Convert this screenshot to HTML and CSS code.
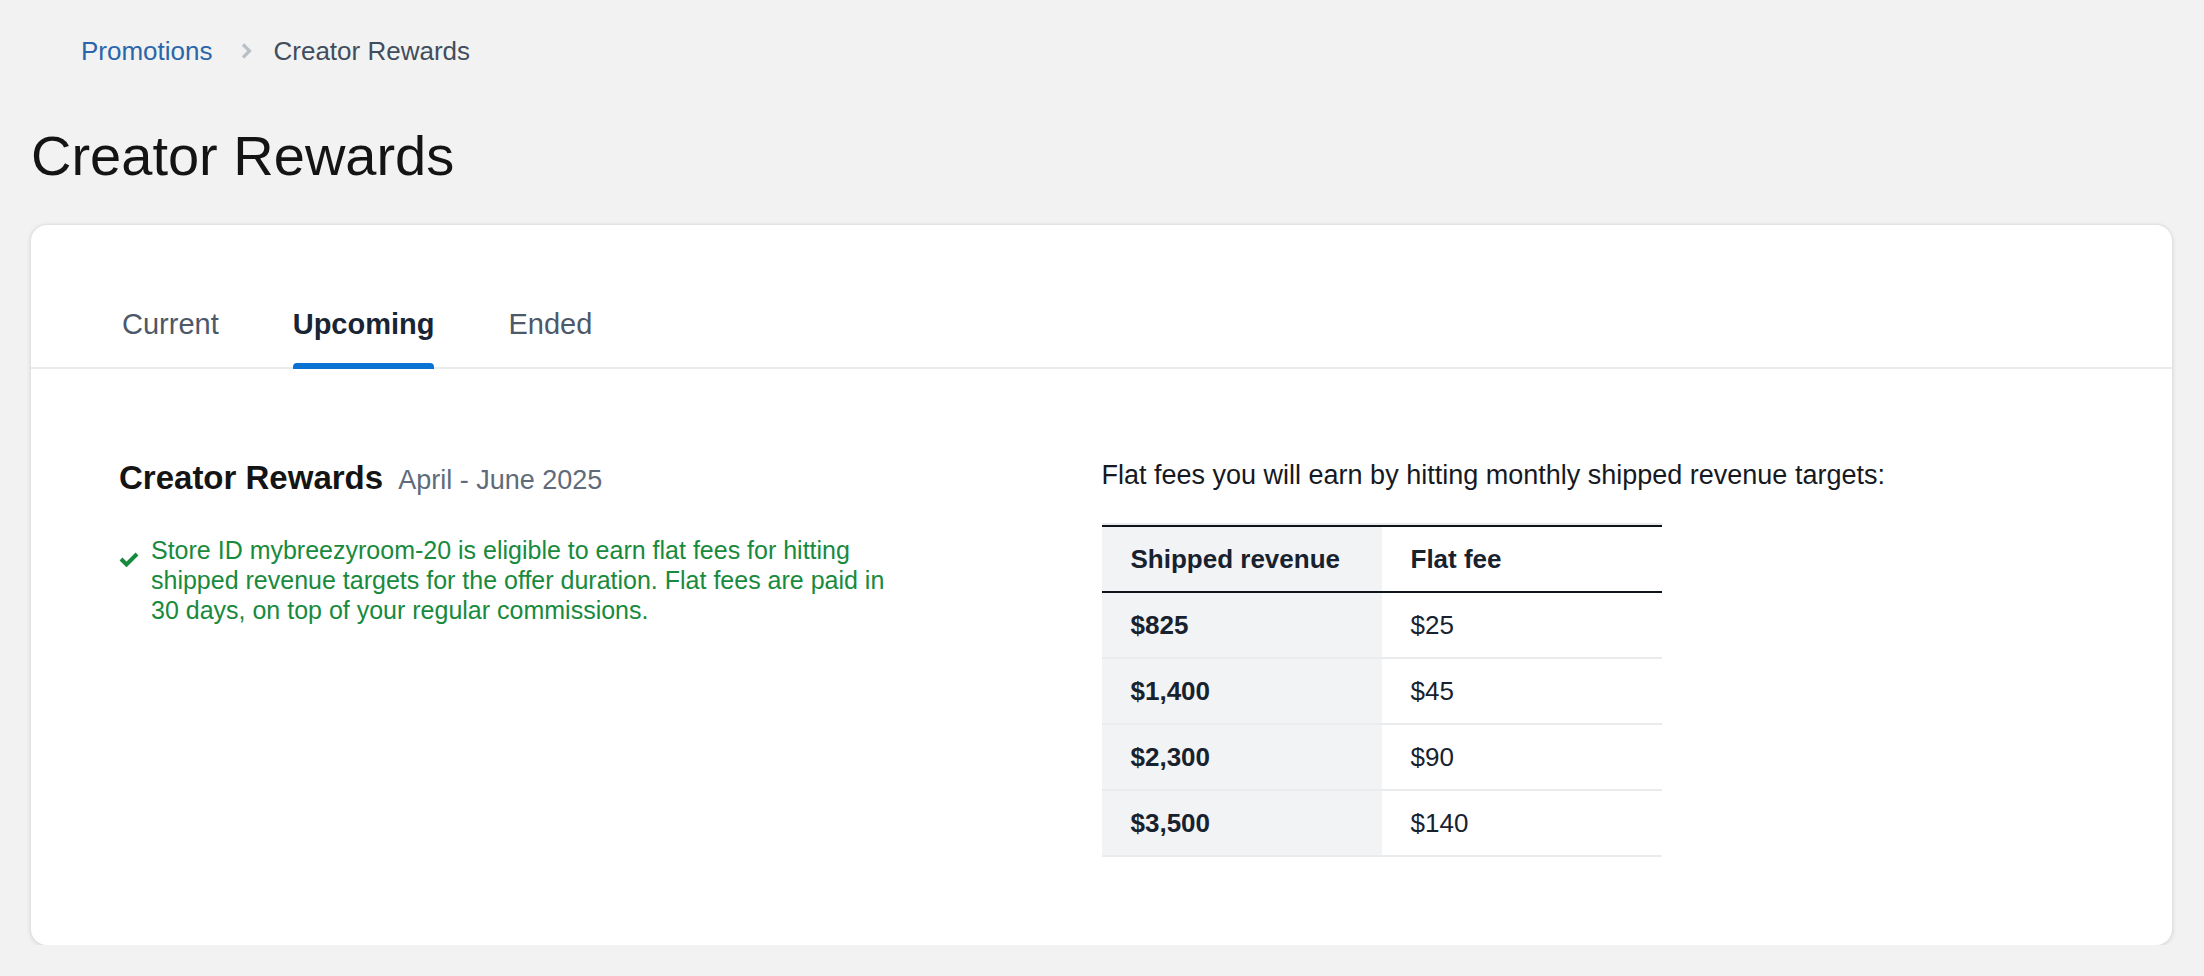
FILE: index.html
```html
<!DOCTYPE html>
<html lang="en">
<head>
  <meta charset="UTF-8">
  <meta name="viewport" content="width=device-width, initial-scale=1.0">
  <title>Creator Rewards</title>
  <link rel="stylesheet" href="styles.css">
</head>
<body>

<div class="page">
  <nav class="breadcrumb">
    <a href="#">Promotions</a>
    <svg class="crumb-sep" width="11" height="16" viewBox="0 0 11 16"><path d="M2 1.5 L8.5 8 L2 14.5" fill="none" stroke="#b9c0ca" stroke-width="3.2"/></svg>
    <span class="crumb-current">Creator Rewards</span>
  </nav>

  <h1 class="page-title">Creator Rewards</h1>

  <section class="card">
    <div class="tabs">
      <span class="tab">Current</span>
      <span class="tab active">Upcoming</span>
      <span class="tab">Ended</span>
    </div>

    <div class="content">
      <div class="col">
        <h2 class="offer-title">Creator Rewards <span class="offer-date">April - June 2025</span></h2>
        <div class="eligible">
          <svg class="check" width="20" height="15" viewBox="0 0 20 15"><path d="M2 7 L7.5 12.5 L18 2" fill="none" stroke="#188a3d" stroke-width="4"/></svg>
          <p>Store ID mybreezyroom-20 is eligible to earn flat fees for hitting shipped revenue targets for the offer duration. Flat fees are paid in 30 days, on top of your regular commissions.</p>
        </div>
      </div>

      <div class="col">
        <p class="fees-intro">Flat fees you will earn by hitting monthly shipped revenue targets:</p>
        <table class="fees">
          <thead>
            <tr><th>Shipped revenue</th><th>Flat fee</th></tr>
          </thead>
          <tbody>
            <tr><td>$825</td><td>$25</td></tr>
            <tr><td>$1,400</td><td>$45</td></tr>
            <tr><td>$2,300</td><td>$90</td></tr>
            <tr><td>$3,500</td><td>$140</td></tr>
          </tbody>
        </table>
      </div>
    </div>
  </section>
</div>

</body>
</html>
```

FILE: styles.css
```css
body {
  font-family: "Liberation Sans", Arial, sans-serif;
  background-color: #f2f2f2;
  margin: 0;
  padding: 0;
  color: #16191f;
}
.page {
  padding: 0 32px 0 31px;
}
.breadcrumb {
  display: flex;
  align-items: center;
  padding: 35px 0 0 50px;
  font-size: 26px;
  line-height: 32px;
}
.breadcrumb a {
  color: #2a66aa;
  text-decoration: none;
}
.crumb-sep {
  margin: 0 22px 0 28px;
}
.crumb-current {
  color: #414d5c;
}
.page-title {
  margin: 57px 0 0 0;
  font-size: 56px;
  line-height: 64px;
  font-weight: normal;
  color: #141414;
}
.card {
  margin-top: 37px;
  background: white;
  border-radius: 16px;
  box-shadow: 0 0 1px 1px #e0e2e5, 0 1px 4px 1px rgba(0,7,22,0.1);
}
.tabs {
  display: flex;
  gap: 74px;
  padding: 82px 0 0 91px;
  border-bottom: 2px solid #e9ebed;
}
.tab {
  position: relative;
  padding-bottom: 26px;
  font-size: 29px;
  line-height: 34px;
  color: #4d5868;
}
.tab.active {
  font-weight: bold;
  color: #192534;
}
.tab.active::after {
  content: "";
  position: absolute;
  left: 0;
  right: 0;
  bottom: -2px;
  height: 6px;
  background: #0972d3;
  border-radius: 4px 4px 0 0;
}
.content {
  display: grid;
  grid-template-columns: 1fr 1fr;
  padding: 89px 88px 88px 88px;
}
.offer-title {
  margin: 0;
  font-size: 33px;
  line-height: 40px;
  font-weight: bold;
  color: #141414;
}
.offer-date {
  margin-left: 6px;
  font-size: 27px;
  font-weight: normal;
  color: #5f6b7a;
}
.eligible {
  display: flex;
  gap: 12px;
  margin-top: 35px;
}
.check {
  flex-shrink: 0;
  margin-top: 17px;
}
.eligible p {
  margin: 0;
  width: 750px;
  font-size: 25px;
  line-height: 30px;
  color: #188a3d;
}
.fees-intro {
  margin: 0;
  font-size: 27px;
  line-height: 34px;
  color: #16191f;
}
.fees {
  margin-top: 31px;
  width: 560px;
  border-collapse: separate;
  border-spacing: 0;
  border-top: 2px solid #e9ebed;
  font-size: 26px;
  color: #18222f;
}
.fees th, .fees td {
  width: 50%;
  padding: 0 29px;
  line-height: 64px;
  text-align: left;
}
.fees th {
  border-top: 2px solid #0f141a;
  border-bottom: 2px solid #0f141a;
}
.fees td {
  border-bottom: 2px solid #e9ebed;
  font-weight: normal;
}
.fees th:first-child, .fees td:first-child {
  background: #f2f3f5;
  font-weight: bold;
}
```
